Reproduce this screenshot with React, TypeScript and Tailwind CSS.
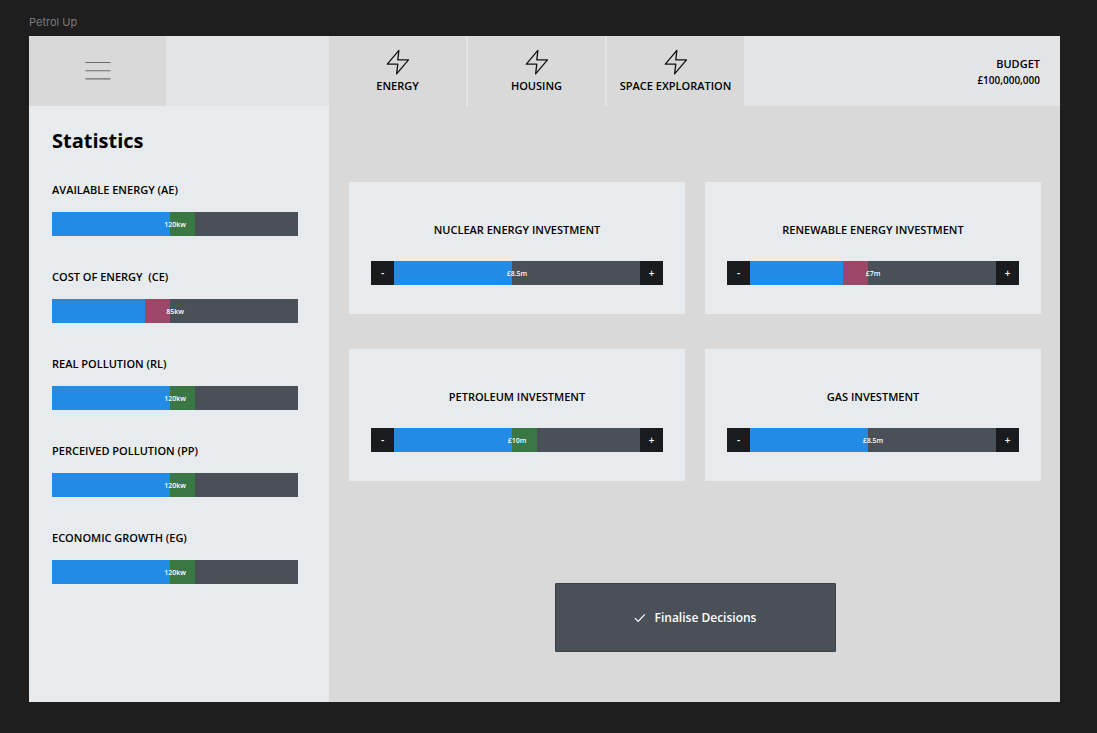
type Tone = "up" | "down";

interface MeterData {
  label: string;
  value: string;
  fill: number;
  change?: Tone;
}

const statistics: MeterData[] = [
  { label: "AVAILABLE ENERGY (AE)", value: "120kw", fill: 48, change: "up" },
  { label: "COST OF ENERGY\u00a0 (CE)", value: "85kw", fill: 38, change: "down" },
  { label: "REAL POLLUTION (RL)", value: "120kw", fill: 48, change: "up" },
  { label: "PERCEIVED POLLUTION (PP)", value: "120kw", fill: 48, change: "up" },
  { label: "ECONOMIC GROWTH (EG)", value: "120kw", fill: 48, change: "up" },
];

const investments: MeterData[] = [
  { label: "NUCLEAR ENERGY INVESTMENT", value: "£8.5m", fill: 48 },
  { label: "RENEWABLE ENERGY INVESTMENT", value: "£7m", fill: 38, change: "down" },
  { label: "PETROLEUM INVESTMENT", value: "£10m", fill: 48, change: "up" },
  { label: "GAS INVESTMENT", value: "£8.5m", fill: 48 },
];

const tabs = ["ENERGY", "HOUSING", "SPACE EXPLORATION"];

const tones: Record<Tone, string> = {
  up: "w-[10%] bg-[#3a7744]",
  down: "w-[10%] bg-[#9c4668]",
};

function BoltIcon() {
  return (
    <svg width="24" height="26" viewBox="0 0 24 26" fill="none" stroke="#111" strokeWidth="1.3" strokeLinejoin="round" aria-hidden="true">
      <path d="M12.9 1.3 1.3 15.2h10.5L10.6 24.9 22.5 10.9H11.8z" />
    </svg>
  );
}

function Meter({ value, fill, change }: MeterData) {
  return (
    <div className="relative flex h-6 flex-1 bg-[#4a5058]">
      <div className="bg-[#228be6]" style={{ width: `${fill}%` }} />
      {change && <div className={tones[change]} />}
      <span className="absolute inset-0 flex items-center justify-center text-[7px] leading-none font-semibold text-white">
        {value}
      </span>
    </div>
  );
}

function StepButton({ sign, label }: { sign: string; label: string }) {
  return (
    <button type="button" aria-label={label} className="flex h-6 w-[23px] items-center justify-center bg-[#1a1b1e] text-[10px] leading-none font-semibold text-white">
      {sign}
    </button>
  );
}

function InvestmentCard(props: MeterData) {
  return (
    <section className="flex flex-col gap-[23px] bg-[#e8ebee] px-[22px] pt-10 pb-[29px]">
      <h2 className="text-center text-[11px] leading-4 font-semibold">{props.label}</h2>
      <div className="flex">
        <StepButton sign="-" label={`Decrease ${props.label}`} />
        <Meter {...props} />
        <StepButton sign="+" label={`Increase ${props.label}`} />
      </div>
    </section>
  );
}

export default function App() {
  return (
    <div className="flex min-h-screen flex-col bg-[#1e1e1e] pt-[14px] pr-[37px] pb-[31px] pl-[29px] font-['Open_Sans',sans-serif] text-black">
      <p className="mb-[6px] font-[Inter,sans-serif] text-[11px] leading-4 text-[#7b7b7b]">Petrol Up</p>
      <div className="flex flex-1 flex-col bg-[#d9d9d9]">
        <header className="flex h-[70px] bg-[#e2e4e6]">
          <div className="flex w-[300px] shrink-0">
            <button type="button" aria-label="Menu" className="flex w-[137px] items-center justify-center bg-[#d9d9d9]">
              <svg width="26" height="20" viewBox="0 0 26 20" stroke="#6b6b6b" strokeWidth="1.1" aria-hidden="true">
                <path d="M.5 1.5h25M.5 9.7h25M.5 17.9h25" />
              </svg>
            </button>
          </div>
          <nav className="flex gap-[2px]">
            {tabs.map((tab) => (
              <button key={tab} type="button" className="flex w-[137px] flex-col items-center justify-center gap-[3px] bg-[#d9d9d9] text-[11px] leading-4 font-semibold">
                <BoltIcon />
                {tab}
              </button>
            ))}
          </nav>
          <div className="ml-auto flex flex-col justify-center pt-[2px] pr-5 text-right font-semibold">
            <span className="text-[11px] leading-4">BUDGET</span>
            <span className="text-[10px] leading-4">£100,000,000</span>
          </div>
        </header>
        <div className="flex flex-1">
          <aside className="w-[300px] shrink-0 bg-[#e8ebee] pt-[21px] pr-[31px] pl-[23px]">
            <h1 className="text-xl leading-7 font-bold">Statistics</h1>
            <div className="mt-[27px] flex flex-col gap-[33px]">
              {statistics.map((item) => (
                <div key={item.label} className="flex flex-col gap-[14px]">
                  <h2 className="text-[11px] leading-4 font-semibold">{item.label}</h2>
                  <div className="flex">
                    <Meter {...item} />
                  </div>
                </div>
              ))}
            </div>
          </aside>
          <main className="flex flex-1 flex-col items-center pt-[76px] pr-[19px] pb-[50px] pl-5">
            <div className="grid w-full grid-cols-2 gap-x-5 gap-y-[35px]">
              {investments.map((item) => (
                <InvestmentCard key={item.label} {...item} />
              ))}
            </div>
            <button type="button" className="mt-auto flex h-[69px] w-[281px] items-center justify-center gap-[9px] rounded-[1px] border border-[#3a3f46] bg-[#4a5058] text-xs font-semibold text-white">
              <svg width="12" height="10" viewBox="0 0 12 10" fill="none" stroke="currentColor" strokeWidth="1.2" aria-hidden="true">
                <path d="M1 5.2 4.2 8.4 10.8 1.4" />
              </svg>
              Finalise Decisions
            </button>
          </main>
        </div>
      </div>
    </div>
  );
}
